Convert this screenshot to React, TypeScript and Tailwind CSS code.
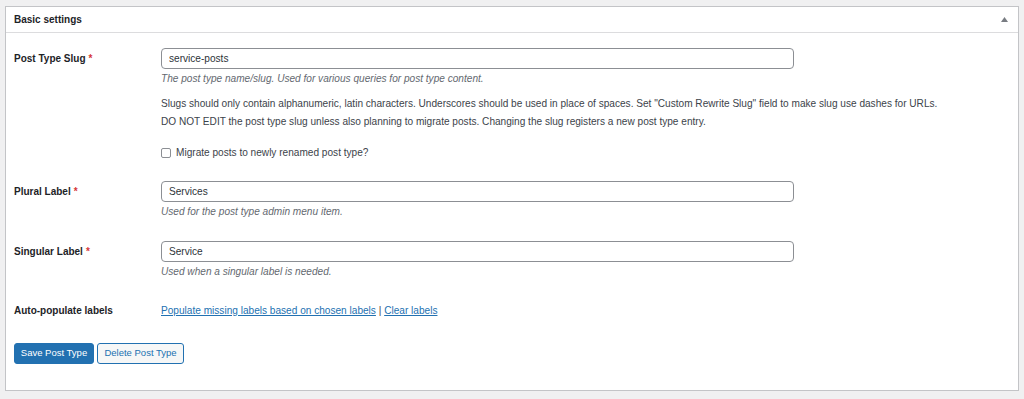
export default function App() {
    const font = { fontFamily: '"Liberation Sans", Arial, sans-serif' }

    return (
        <div className="w-[1024px] h-[399px] bg-[#f0f0f1] pt-[6px] px-[5px] overflow-hidden" style={font}>
            <div className="bg-white border border-[#c3c4c7] h-[385px] flex flex-col">
                {/* header */}
                <div className="h-[26px] border-b border-[#dcdcde] flex items-center justify-between pl-[8px] pr-[10px]">
                    <h2 className="text-[10px] font-bold text-[#1d2327]">Basic settings</h2>
                    <svg width="7" height="5" viewBox="0 0 7 5" className="mb-[1px]">
                        <path d="M0 5 L3.5 0 L7 5 Z" fill="#787c82" />
                    </svg>
                </div>

                <div className="pl-[8px] pt-[15px] text-[10.1px] text-[#3c434a]">
                    {/* Post type slug */}
                    <div className="grid grid-cols-[147px_1fr]">
                        <Label text="Post Type Slug" required />
                        <div>
                            <Input value="service-posts" />
                            <Desc text="The post type name/slug. Used for various queries for post type content." />
                            <p className="mt-[8px] leading-[18px]">
                                Slugs should only contain alphanumeric, latin characters. Underscores should be used in place of spaces. Set "Custom Rewrite Slug" field to make slug use dashes for URLs.
                            </p>
                            <p className="leading-[18px]">
                                DO NOT EDIT the post type slug unless also planning to migrate posts. Changing the slug registers a new post type entry.
                            </p>
                            <label className="mt-[13px] flex items-center h-[18px]">
                                <span className="w-[10px] h-[10px] border border-[#8c8f94] rounded-[2px] bg-white" />
                                <span className="ml-[5px]">Migrate posts to newly renamed post type?</span>
                            </label>
                        </div>
                    </div>

                    {/* Plural */}
                    <div className="grid grid-cols-[147px_1fr] mt-[19px]">
                        <Label text="Plural Label" required />
                        <div>
                            <Input value="Services" />
                            <Desc text="Used for the post type admin menu item." />
                        </div>
                    </div>

                    {/* Singular */}
                    <div className="grid grid-cols-[147px_1fr] mt-[21px]">
                        <Label text="Singular Label" required />
                        <div>
                            <Input value="Service" />
                            <Desc text="Used when a singular label is needed." />
                        </div>
                    </div>

                    {/* Auto populate */}
                    <div className="grid grid-cols-[147px_1fr] mt-[22px] items-center">
                        <div className="font-bold text-[10px] text-[#1d2327] leading-[18px]">Auto-populate labels</div>
                        <div className="leading-[18px]">
                            <a href="#" className="text-[#2271b1] underline">Populate missing labels based on chosen labels</a>
                            <span className="text-[#3c434a]"> | </span>
                            <a href="#" className="text-[#2271b1] underline">Clear labels</a>
                        </div>
                    </div>

                    {/* Buttons */}
                    <div className="mt-[23px] flex gap-[3px]">
                        <button className="h-[21px] w-[80px] rounded-[3px] bg-[#2271b1] border border-[#2271b1] text-white text-[9.5px]">
                            Save Post Type
                        </button>
                        <button className="h-[21px] w-[87px] rounded-[3px] bg-[#f6f7f7] border border-[#2271b1] text-[#2271b1] text-[9.5px]">
                            Delete Post Type
                        </button>
                    </div>
                </div>
            </div>
        </div>
    )
}

function Label({ text, required }: { text: string; required?: boolean }) {
    return (
        <div className="font-bold text-[10px] text-[#1d2327] pt-[3px] leading-[16px]">
            {text}
            {required && <span className="text-[#d63638] ml-[3px]">*</span>}
        </div>
    )
}

function Input({ value }: { value: string }) {
    return (
        <input
            type="text"
            readOnly
            value={value}
            className="w-[633px] h-[21px] px-[7px] border border-[#8c8f94] rounded-[4px] text-[10.1px] text-[#2c3338] outline-none"
        />
    )
}

function Desc({ text }: { text: string }) {
    return <p className="mt-[2px] leading-[16px] italic text-[#646970]">{text}</p>
}
